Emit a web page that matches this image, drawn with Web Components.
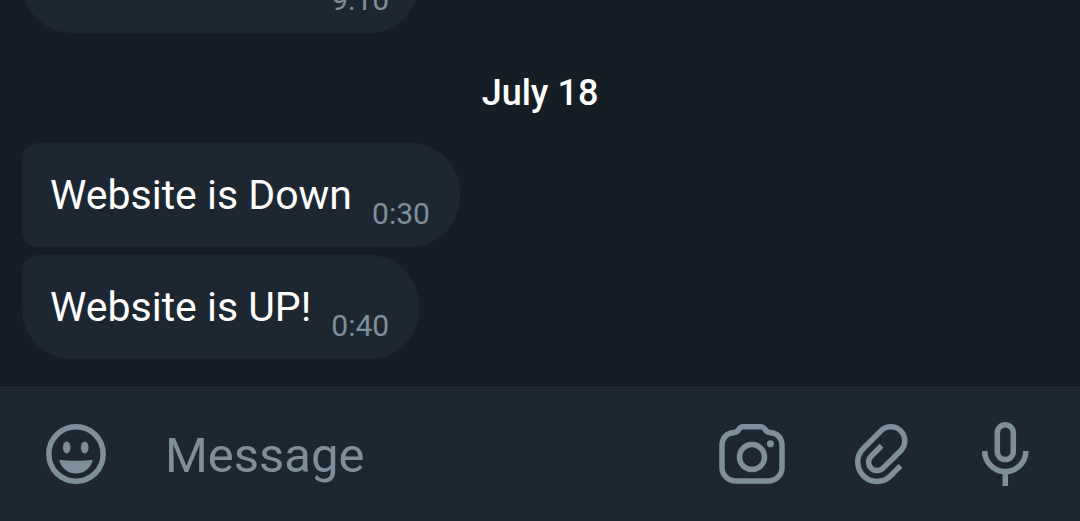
<!DOCTYPE html>
<html lang="en">
<head>
<meta charset="utf-8">
<meta name="viewport" content="width=device-width, initial-scale=1">
<title>Chat</title>
<style>
  html, body { margin: 0; height: 100%; }
  body {
    --page: #151e26;
    --surface: #1d2732;
    --muted: #7c8f9a;
    --line: #10171e;
    background: var(--page);
    color: #fff;
    font-family: Roboto, "Noto Sans", sans-serif;
  }
</style>
</head>
<body>
<chat-screen>
  <chat-message class="long" shape="last" time="9:10"></chat-message>
  <chat-date>July 18</chat-date>
  <chat-message shape="first" time="0:30">Website is Down</chat-message>
  <chat-message shape="last" time="0:40">Website is UP!</chat-message>
  <chat-composer slot="composer"></chat-composer>
</chat-screen>

<script>
  function define(name, html, setup) {
    const template = document.createElement('template');
    template.innerHTML = html;
    customElements.define(name, class extends HTMLElement {
      constructor() {
        super();
        this.attachShadow({ mode: 'open' }).append(template.content.cloneNode(true));
      }
      connectedCallback() {
        if (setup) setup(this, this.shadowRoot);
      }
    });
  }

  // Messages stack up from the composer; older ones leave at the top.
  define('chat-screen', `
    <style>
      :host { display: flex; flex-direction: column; height: 100vh; overflow: hidden; }
      main {
        flex: 1; min-height: 0; overflow: hidden; box-sizing: border-box;
        display: flex; flex-direction: column; justify-content: flex-end;
        align-items: flex-start; gap: 8px; padding: 0 22px 26px;
      }
    </style>
    <main><slot></slot></main>
    <slot name="composer"></slot>
  `);

  define('chat-date', `
    <style>
      :host {
        display: block; flex: none; align-self: center; padding: 30px 0 20px;
        font-size: 36px; font-weight: 500; line-height: 44px;
      }
    </style>
    <slot></slot>
  `);

  define('chat-message', `
    <style>
      :host {
        display: flex; flex: none; box-sizing: border-box; min-height: 104px;
        padding: 0 30px 0 28px; gap: 20px; background: var(--surface);
        border-radius: 16px 50px 50px 16px;
      }
      :host([shape="last"]) { border-bottom-left-radius: 50px; }
      :host(.long) { min-width: 397px; justify-content: flex-end; }
      p { margin: 0; padding-top: 28px; font-size: 41px; line-height: 48px; }
      time { align-self: flex-end; padding-bottom: 15px; font-size: 30px; line-height: 36px; color: var(--muted); }
    </style>
    <p><slot></slot></p>
    <time></time>
  `, (host, root) => {
    root.querySelector('time').textContent = host.getAttribute('time');
  });

  define('chat-composer', `
    <style>
      :host { display: block; flex: none; background: var(--surface); border-top: 1px solid var(--line); }
      form { display: flex; align-items: center; gap: 60px; padding: 36px 44px 35px; }
      button {
        flex: none; display: block; margin: 0; padding: 0; border: 0;
        background: none; color: var(--muted); cursor: pointer;
      }
      svg { display: block; height: 64px; fill: none; stroke: currentColor; stroke-width: 5.5; }
      .solid { fill: currentColor; stroke: none; }
      input {
        flex: 1; min-width: 0; margin: 0 0 0 -3px; padding: 2px 0 0; border: 0; outline: 0;
        box-sizing: border-box; height: 64px; background: none; color: #fff;
        font: 49px/60px Roboto, "Noto Sans", sans-serif;
      }
      input::placeholder { color: var(--muted); opacity: 1; }
    </style>
    <form>
      <button type="button" aria-label="Emoji">
        <svg width="64" viewBox="0 0 64 64">
          <circle cx="32" cy="32" r="27.2"/>
          <g class="solid">
            <ellipse cx="22.7" cy="25.4" rx="3.8" ry="6"/>
            <ellipse cx="40.7" cy="25.4" rx="3.8" ry="6"/>
            <path d="M16.6 37.7C20 39 44 39 47.400 37.700Q49 37.600 48.400 39.200C46 47 39.500 51.500 32 51.500S18 47 15.600 39.200Q15 37.600 16.600 37.700Z"/>
          </g>
        </svg>
      </button>
      <input type="text" placeholder="Message" aria-label="Message">
      <button type="button" aria-label="Camera">
        <svg width="72" viewBox="0 0 72 64">
          <path d="M6 24C6 15.5 10.5 11 18 10.5C23 10.2 22.5 4.800 27 4.800H45C49.500 4.800 49 10.200 54 10.500C61.500 11 66 15.500 66 24V45.500A13.500 13.500 0 0 1 52.500 59H19.500A13.500 13.500 0 0 1 6 45.500Z"/>
          <circle cx="36" cy="35" r="12.5"/>
          <circle class="solid" cx="54.4" cy="21.8" r="3.5"/>
        </svg>
      </button>
      <button type="button" aria-label="Attach file">
        <svg width="64" viewBox="-1 0 64 64">
          <path d="M51.5 43.9L41.65 53.75A19.3 19.3 0 0 1 14.35 26.45L31.9 8.9A14 14 0 0 1 51.7 28.7L34 46.1A8.4 8.4 0 0 1 22.1 34.2L32.5 23.8"/>
        </svg>
      </button>
      <button type="button" aria-label="Record voice message">
        <svg width="64" viewBox="-1 0 64 64">
          <rect x="24.3" y="2.8" width="16" height="34.8" rx="8"/>
          <path d="M11.7 29A20.6 20.6 0 0 0 52.9 29M32.3 49V64"/>
        </svg>
      </button>
    </form>
  `);
</script>
</body>
</html>
